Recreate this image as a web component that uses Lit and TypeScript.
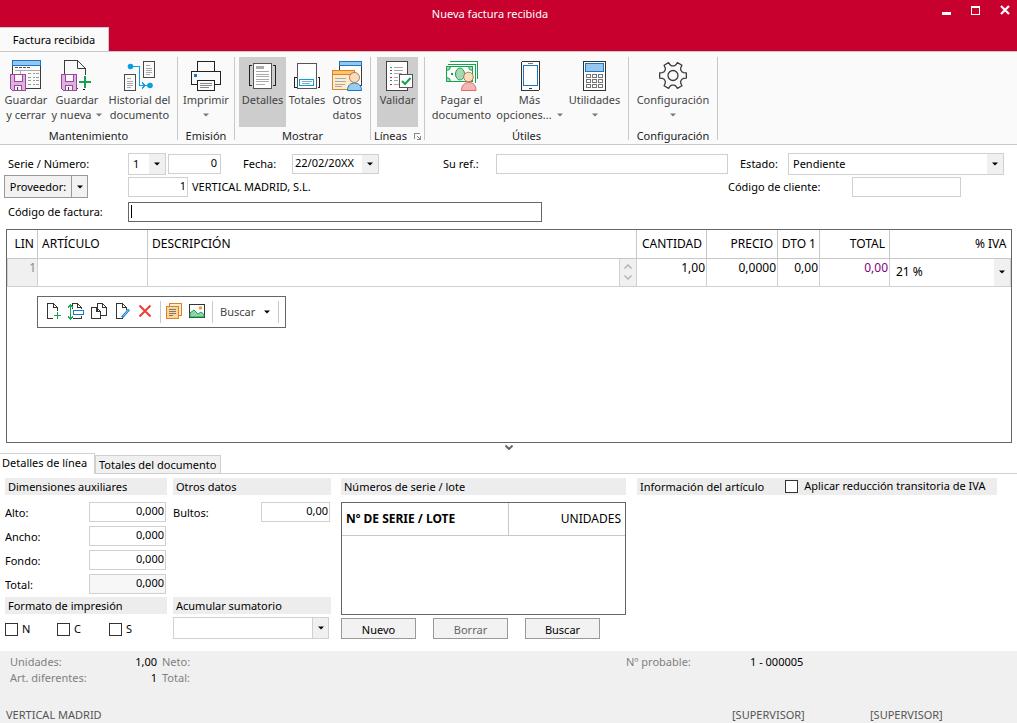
import { LitElement, html, css, svg, nothing } from "lit";
import { customElement, state } from "lit/decorators.js";
import { classMap } from "lit/directives/class-map.js";
import { styleMap } from "lit/directives/style-map.js";

const INK = "#3b3b3b";
const BLUE = "#1a78c2";
const GREEN = "#16a34f";
const PURPLE = "#9c46a0";

const floppy = svg`
  <path d="M.5 14.5h15v16H2.500l-2-2z" fill="#dcb3de" stroke=${PURPLE}/>
  <rect x="4.500" y="14.500" width="8" height="7" fill="#fafafa" stroke=${PURPLE}/>
  <rect x="4.500" y="25.500" width="7" height="5" fill="#fafafa" stroke=${PURPLE}/>
  <path d="M7 27v2.500" stroke=${INK}/>`;

const gearPath = (() => {
  const p = (r: number, deg: number) => {
    const a = (deg * Math.PI) / 180;
    return `${(16 + r * Math.cos(a)).toFixed(2)} ${(15.5 + r * Math.sin(a)).toFixed(2)}`;
  };
  let d = "";
  for (let k = 0; k < 6; k++) {
    const a = k * 60;
    d += `${k ? "L" : "M"}${p(9.6, a - 23)}L${p(11, a - 15)}L${p(13.6, a - 11)}L${p(13.6, a + 11)}L${p(11, a + 15)}L${p(9.6, a + 23)}`;
  }
  return d + "Z";
})();

const icons: Record<string, unknown> = {
  saveClose: svg`
    <rect x="2.500" y=".5" width="28" height="28" fill="#fafafa" stroke=${INK}/>
    <rect x="2.500" y=".5" width="28" height="5" fill="#96c8ef" stroke=${BLUE}/>
    <path d="M5 7.500h3m1 0h3m1 0h3m1 0h3" stroke="#555"/>
    <path d="M5 10.500h25M10.500 10.500v4" stroke="#aaa"/>
    <path d="M18 13.500h3m2 0h2m1 0h3M18 17.500h3m2 0h2m1 0h3M18 20.500h3m2 0h2m1 0h3M18 24.500h3m2 0h2m1 0h3" stroke="#999"/>
    ${floppy}`,
  saveNew: svg`
    <path d="M3.500 28.500V.5h13l8 8v20z" fill="#fafafa" stroke=${INK}/>
    <path d="M16.500 .5v8h8" fill="none" stroke=${INK} shape-rendering="auto"/>
    <rect x="17" y="15" width="14" height="14" fill="#fafafa"/>
    <path d="M24.500 29v1.500H18" stroke="#fafafa"/>
    ${floppy}
    <path d="M24 16v12M18 22h12" stroke=${GREEN} stroke-width="2"/>`,
  history: svg`
    <rect x=".5" y="14.500" width="11" height="16" fill="#fafafa" stroke="#4a4a4a"/>
    <path d="M3 18.500h4M3 21.500h6M3 23.500h6M3 25.500h6M3 27.500h4" stroke="#aaa"/>
    <rect x="19.500" y="1.500" width="11" height="16" fill="#fafafa" stroke="#4a4a4a"/>
    <path d="M22 5.500h4M22 8.500h6M22 10.500h6M22 12.500h6M22 14.500h4" stroke="#aaa"/>
    <path d="M7 6.500h8.500v19H25M18 22.500l3 3-3 3" fill="none" stroke="#0a9fe2"/>
    <circle cx="6.500" cy="6.500" r="2.800" fill="#0a9fe2" shape-rendering="auto"/>
    <circle cx="26" cy="25.500" r="2.800" fill="#0a9fe2" shape-rendering="auto"/>`,
  print: svg`
    <rect x="7.500" y="1.500" width="17" height="10" fill="#fafafa" stroke="#222"/>
    <rect x="1.500" y="11.500" width="29" height="13" fill="#fafafa" stroke="#222"/>
    <rect x="4" y="14" width="3" height="3" fill=${BLUE}/>
    <rect x="7.500" y="20.500" width="17" height="10" fill="#fafafa" stroke="#222"/>
    <path d="M10 23.500h12M10 25.500h12M10 27.500h9" stroke="#888"/>`,
  details: svg`
    <rect x="6.500" y="3.500" width="18" height="25" fill="#fff" stroke="#555"/>
    <rect x="9" y="6" width="8" height="3" fill="#aaa"/>
    <path d="M9 11.500h13M9 14.500h13M9 16.500h13M9 19.500h13M9 21.500h13M9 24.500h9" stroke="#aaa"/>
    <path d="M5 5.500H2.500v20H5M26 5.500h2.500v20H26" fill="none" stroke="#222"/>`,
  totals: svg`
    <rect x="6.500" y="3.500" width="19" height="25" fill="#fff" stroke="#555"/>
    <rect x="8.500" y="19.500" width="14" height="6" fill="#fff" stroke="#0a9fe2"/>
    <path d="M11 21.500h10M11 23.500h8" stroke="#8ab"/>
    <path d="M5.500 17.500h-2v10h2M27 17.500h1.500v10H27" fill="none" stroke="#222"/>`,
  others: svg`
    <rect x="8.500" y="1.500" width="22" height="24" fill="#fff" stroke=${INK}/>
    <rect x="8.500" y="1.500" width="22" height="4" fill="#96c8ef" stroke=${BLUE}/>
    <rect x="1.500" y="10.500" width="22" height="19" fill="#fdeccb" stroke="#d9822b"/>
    <rect x="1.500" y="10.500" width="22" height="4" fill="#ffc36b" stroke="#d9822b"/>
    <path d="M4 18.500h11M4 21.500h11M4 24.500h10M4 26.500h7" stroke="#aaa"/>
    <g shape-rendering="auto">
      <path d="M16.500 30.500c0-5 3-7.500 7-7.500s7 2.500 7 7.500z" fill="#9bcbee" stroke=${BLUE}/>
      <circle cx="23.500" cy="17.500" r="5" fill="#fbdcbf" stroke="#b07a50"/>
    </g>`,
  validate: svg`
    <rect x="4.500" y="1.500" width="21" height="29" fill="#fff" stroke="#444"/>
    <path d="M8 7.500h2M8 13.500h2M8 20.500h2" stroke=${GREEN}/>
    <path d="M8 10.500h2M8 17.500h2M8 24.500h2" stroke="#d11b3f"/>
    <path d="M12 7.500h9M12 10.500h9M12 13.500h8M12 17.500h4M12 20.500h4M12 24.500h5" stroke="#aaa"/>
    <rect x="17.500" y="14.500" width="13" height="13" fill="#fff" stroke="#555"/>
    <path d="M20 21l3 3 5.500-6" fill="none" stroke=${GREEN} stroke-width="2" shape-rendering="auto"/>`,
  pay: svg`
    <path d="M4 1.500h27.500v17M2 4.500h27.500v18" fill="none" stroke=${GREEN}/>
    <rect x=".5" y="6.500" width="26" height="15" fill="#fff" stroke=${GREEN}/>
    <g shape-rendering="auto">
      <path d="M.5 10.500a4 4 0 0 0 4-4h-4zM.5 17.500a4 4 0 0 1 4 4h-4zM26.500 10.500a4 4 0 0 1-4-4h4z" fill="#a9d8b5" stroke=${GREEN}/>
      <ellipse cx="14" cy="14" rx="4.500" ry="6" fill="#a9d8b5" stroke=${GREEN}/>
      <circle cx="6" cy="14" r="1.200" fill=${GREEN}/>
      <path d="M15.500 30.500c0-5 3-8 7.500-8s7 3 7 8z" fill="#f6b5b5" stroke="#e36a6a"/>
      <circle cx="22.500" cy="17" r="4.800" fill="#fbdcbf" stroke="#b07a50"/>
    </g>`,
  phone: svg`
    <rect x="7.500" y="1.500" width="18" height="29" rx="1.500" fill="#fff" stroke="#333"/>
    <rect x="9.500" y="5.500" width="14" height="20" fill="#fff" stroke=${BLUE}/>
    <path d="M14 3.500h5" stroke="#777"/><path d="M15 28.500h3" stroke="#333"/>`,
  calc: svg`
    <rect x="4.500" y="1.500" width="22" height="29" fill="#fff" stroke="#333"/>
    <rect x="6.500" y="3.500" width="18" height="8" fill="#96c8ef" stroke=${BLUE}/>
    ${[14.5, 19.5, 24.5].map((y) => [7.5, 13.5, 19.5].map((x) => svg`<rect x=${x} y=${y} width="4" height="3" fill="#fff" stroke="#777"/>`))}`,
  gear: svg`
    <g shape-rendering="auto" fill="none" stroke=${INK} stroke-width="1.300" stroke-linejoin="round">
      <path d=${gearPath}/><circle cx="16" cy="15.500" r="5"/>
    </g>`,
};

const lineIcons: Record<string, unknown> = {
  "Nueva línea": svg`<path d="M8 15.500H2.500V.5h6l4 4V8M8.500 .5v4h4" fill="none" stroke="#333"/>
    <path d="M12.500 9v7M9 12.500h7" stroke=${GREEN}/>`,
  "Insertar línea": svg`<path d="M4.500 6V.5h5l4 4V6M9.500 .5v4h4M5 15.500h8.500V13" fill="none" stroke="#333"/>
    <rect x="5.500" y="7.500" width="10" height="4" fill="#fff" stroke=${BLUE}/>
    <path d="M2.500 2v14M0 4.500l2.500-2.500 2.500 2.500M0 13.500L2.500 16 5 13.500" fill="none" stroke=${GREEN}/>`,
  "Duplicar línea": svg`<path d="M6.500 12.500V.5h5l4 4v8zM11.500 .5v4h4" fill="#fff" stroke="#333"/>
    <path d="M.5 15.500V4.500h5l4 4v7zM5.500 4.500v4h4" fill="#fff" stroke="#333"/>`,
  "Modificar línea": svg`<path d="M12.500 7V4.500l-4-4h-6v15h6M8.500 .5v4h4" fill="none" stroke="#333"/>
    <path d="M8 14.500L15 6.500" stroke=${BLUE} stroke-width="2.600" shape-rendering="auto"/>
    <path d="M9 13.500L14.500 7" stroke="#9ccbef" stroke-width="1" shape-rendering="auto"/>`,
  "Borrar línea": svg`<path d="M2.500 2.500l11 11M13.500 2.500l-11 11" stroke="#ee3d36" stroke-width="2" shape-rendering="auto"/>`,
  "Notas": svg`<path d="M3.500 3V.5h12v12H13" fill="#fdeccb" stroke="#d9822b"/>
    <rect x=".5" y="3.500" width="12" height="12" fill="#ffd597" stroke="#d9822b"/>
    <path d="M3 6.500h7M3 8.500h7M3 10.500h7M3 12.500h4" stroke="#777"/>`,
  "Imagen": svg`<rect x=".5" y="1.500" width="15" height="13" fill="#fff" stroke="#333"/>
    <path d="M1 10l4-3 4 4 3-2 3 2.500v2.500H1z" fill="#8fd3a8" stroke=${GREEN} shape-rendering="auto"/>
    <circle cx="11.500" cy="5" r="1.800" fill="#f39a3d" shape-rendering="auto"/>`,
};

interface RibbonItem { icon: string; lines: string[]; width: number; arrow?: "inline" | "below"; on?: boolean }
interface RibbonGroup { title: string; items: RibbonItem[]; launcher?: boolean }

const ribbon: RibbonGroup[] = [
  { title: "Mantenimiento", items: [
    { icon: "saveClose", lines: ["Guardar", "y cerrar"], width: 50 },
    { icon: "saveNew", lines: ["Guardar", "y nueva"], width: 52, arrow: "inline" },
    { icon: "history", lines: ["Historial del", "documento"], width: 73 } ] },
  { title: "Emisión", items: [{ icon: "print", lines: ["Imprimir"], width: 48, arrow: "below" }] },
  { title: "Mostrar", items: [
    { icon: "details", lines: ["Detalles"], width: 47, on: true },
    { icon: "totals", lines: ["Totales"], width: 42 },
    { icon: "others", lines: ["Otros", "datos"], width: 38 } ] },
  { title: "Líneas", launcher: true, items: [{ icon: "validate", lines: ["Validar"], width: 41, on: true }] },
  { title: "Útiles", items: [
    { icon: "pay", lines: ["Pagar el", "documento"], width: 65 },
    { icon: "phone", lines: ["Más", "opciones..."], width: 71, arrow: "inline" },
    { icon: "calc", lines: ["Utilidades"], width: 59, arrow: "below" } ] },
  { title: "Configuración", items: [{ icon: "gear", lines: ["Configuración"], width: 80, arrow: "below" }] },
];

const arrow = html`<svg class="arrow" width="6" height="4" viewBox="0 0 6 4" aria-hidden="true"><path d="M0 .5h6L3 3.500z" fill="currentColor"/></svg>`;

@customElement("app-root")
export class AppRoot extends LitElement {
  @state() private tab = 0;

  static styles = css`
    :host { display: flex; flex-direction: column; min-height: 100vh; background: #fff; color: #000;
      font: 11px/16px "Noto Sans", "Open Sans", sans-serif; }
    * { box-sizing: border-box; }
    button, input, select { font: inherit; color: inherit; margin: 0; border-radius: 0; }
    button { cursor: pointer; }
    svg { display: block; flex: none; }

    .titlebar { background: #c8002d; color: #fff; height: 27px; display: flex; align-items: center; padding: 0 7px 0 38px; }
    .title { flex: 1; text-align: center; font: inherit; margin: 0; }
    .window { display: flex; gap: 19px; margin-bottom: 8px; }
    .window button { border: 0; padding: 0; background: none; color: #fff; }
    .tabs { background: #c8002d; display: flex; }
    .ribbon-tab { border: 0; border-top: 1px solid #c8c8c8; border-right: 1px solid #c8c8c8; background: #fafafa; height: 24px; width: 109px; padding: 0; }

    .ribbon { display: flex; background: #fafafa; border-top: 1px solid #c8c8c8; border-bottom: 1px solid #c8c8c8; padding: 5px 0 4px; height: 94px; }
    .group { display: flex; flex-direction: column; justify-content: space-between; border-right: 1px solid #c8c8c8; padding: 0 4px; }
    .group:first-child { padding: 0 1px; }
    .group.launch { padding: 0 6px; }
    .items { display: flex; }
    .cmd { border: 0; background: none; color: #444; padding: 3px 0 0; height: 70px; display: flex; flex-direction: column; align-items: center; line-height: 15px; white-space: nowrap; }
    .cmd.on { background: #cdcdcd; }
    .cmd .arrow { color: #777; }
    .cmd.below .arrow { margin-top: 6px; }
    .last { display: flex; align-items: center; gap: 5px; }
    .caption { display: flex; justify-content: center; gap: 7px; line-height: 12px; align-items: center; color: #222; height: 8px; }
    .launch .caption { margin: 0 -5px; }

    .form { display: flex; flex-direction: column; padding: 7px 13px 8px 8px; }
    .line { display: flex; align-items: center; height: 23px; }
    .line.code { height: 25px; padding-top: 2px; margin-bottom: -2px; }
    .field { border: 1px solid #d0d0d0; background: #fff; height: 20px; padding: 0 3px 2px; min-width: 0; outline: none; }
    .num { text-align: right; }
    .pick { display: grid; align-items: stretch; height: 22px; border: 1px solid #d0d0d0; background: #fff; min-width: 0; }
    .pick select, .pick input { grid-area: 1 / 1; appearance: none; border: 0; background: none; padding: 0 18px 0 4px; min-width: 0; width: 100%; outline: none; }
    .pick .drop { grid-area: 1 / 1; justify-self: end; width: 16px; background: #f0f0f0; display: grid; place-items: center; pointer-events: none; }
    .key { width: 120px; }
    .serie { width: 38px; margin-right: 2px; }
    .number { width: 53px; }
    .date-key { width: 71px; padding-left: 22px; }
    .date { width: 87px; height: 20px; }
    .date input { padding: 0 18px 2px 2px; }
    .ref-key { width: 117px; padding-left: 64px; }
    .ref { flex: 224 1 0; }
    .state-key { width: 60px; padding-left: 12px; }
    .state { flex: 214 1 0; }
    .split { display: flex; width: 84px; margin: 0 40px 0 -4px; height: 23px; border: 1px solid #999; background: #f2f2f2; }
    .split button { border: 0; background: none; padding: 0; }
    .split .main { flex: 1; }
    .split .more { width: 16px; border-left: 1px solid #999; display: grid; place-items: center; }
    .supplier { width: 60px; padding: 0 1px 2px; margin-right: 4px; }
    .client-key { margin-left: auto; width: 124px; }
    .client { width: 109px; margin-right: 43px; }
    .invoice { width: 414px; border-color: #666; background: #fff linear-gradient(#000, #000) 2px 2px / 1px 13px no-repeat; }

    .lines { flex: 1; margin: 0 5px 0 6px; border: 1px solid #666; min-height: 160px; }
    table { border-collapse: collapse; table-layout: fixed; width: 100%; }
    th { font-weight: 400; font-size: 12px; height: 28px; padding: 0 4px; text-align: left; white-space: nowrap; border: 1px solid #c8c8c8; border-top: 0; }
    th:first-child, td:first-child { border-left: 0; }
    th:last-child { border-right: 0; }
    th.num { text-align: right; }
    .lines th:first-child { padding: 0 3px; text-align: right; }
    .lines td { height: 28px; padding: 0; border: 1px solid #d0d0d0; vertical-align: top; }
    .lines td input { display: block; width: 100%; height: 18px; border: 0; background: none; padding: 0 1px; outline: none; font-size: 12px; }
    .lines td:first-child { background: #f0f0f0; color: #888; text-align: right; padding-right: 1px; line-height: 18px; font-size: 12px; }
    .lines .pick { border: 0; height: 27px; font-size: 12px; }
    .lines .pick select { padding-left: 6px; }
    .w-lin { width: 30px; } .w-art { width: 110px; } .w-qty { width: 70px; } .w-price { width: 71px; } .w-dto { width: 42px; } .w-total { width: 70px; } .w-iva { width: 121px; }
    th.w-dto { padding: 0 3px; }
    .desc { display: flex; }
    .desc input { flex: 1; }
    .spin { width: 17px; height: 27px; background: #f0f0f0; border-left: 1px solid #d0d0d0; display: flex; flex-direction: column; justify-content: space-around; align-items: center; padding: 2px 0; }
    .spin button { border: 0; background: none; padding: 0; }
    .total-value { color: #800080; }

    .toolbar { display: flex; width: max-content; align-items: center; margin: 9px 0 0 30px; border: 1px solid #666; height: 32px; padding: 4px; }
    .toolbar button { border: 0; background: none; padding: 0; width: 23px; height: 22px; display: grid; place-items: center; }
    .toolbar .search { width: 60px; display: flex; align-items: center; justify-content: space-between; padding: 0 5px; color: #444; }
    .toolbar .search .arrow { color: #000; }
    .bar { width: 1px; height: 22px; margin: 0 2px 0 3px; background: #c8c8c8; }

    .splitter { display: grid; place-items: center; height: 10px; border: 0; background: none; width: 100%; padding: 0 0 2px; }
    .sheet-tabs { display: flex; align-items: flex-end; border-bottom: 1px solid #d0d0d0; height: 21px; }
    .sheet-tab { border: 1px solid #d0d0d0; border-bottom: 0; background: #f0f0f0; height: 18px; padding: 0 3px; white-space: nowrap; width: 126px; text-align: left; }
    .sheet-tab.active { background: #fff; height: 21px; margin-bottom: -1px; border-left: 0; padding: 0 2px 2px; width: 95px; }

    .panel { display: grid; grid-template-columns: 162px 158px 285px 1fr; column-gap: 6px; padding: 4px 20px 12px 5px; }
    .panel .lots { margin: 0 -4px 0 4px; }
    .panel .info { margin-left: 9px; }
    .stack { display: flex; flex-direction: column; }
    h2 { font: inherit; margin: 0; background: #ededed; height: 17px; line-height: 18px; padding: 0 3px; white-space: nowrap; }
    .pairs { display: flex; flex-direction: column; gap: 4px; margin: 7px 1px 4px 0; height: 91px; }
    .pair { display: flex; justify-content: space-between; height: 20px; align-items: center; }
    .pair label { padding-top: 2px; }
    .pair .field { padding: 0 1px 3px; }
    .pair .wide { width: 77px; } .pair .narrow { width: 69px; }
    .field.readonly { background: #f7f7f7; }
    .checks { display: flex; margin-top: 7px; }
    .check { display: flex; align-items: center; gap: 4px; width: 52px; }
    .check input { appearance: none; width: 13px; height: 13px; border: 1px solid #333; background: #fff; }
    .sum { width: 156px; margin-top: 3px; }
    .sum .drop { border-left: 1px solid #d0d0d0; }
    .serials { border: 1px solid #666; height: 113px; margin-top: 7px; }
    .serials th { height: 32px; }
    .serials th:first-child { font-weight: 700; width: 166px; }
    .actions { display: flex; gap: 17px; margin-top: 3px; }
    .actions button { width: 75px; height: 21px; border: 1px solid #999; background: #f2f2f2; padding: 2px 0 0; }
    .actions button:disabled { color: #666; }
    .info h2 { display: flex; }
    .check.iva { margin-left: 21px; width: auto; gap: 6px; height: 16px; }

    .footer { background: #f0f0f0; color: #808080; height: 72px; display: flex; flex-direction: column; justify-content: space-between; padding: 3px 0 0; }
    .sums { display: grid; grid-template-columns: 97px 50px 1fr 124px 267px; padding-left: 10px; }
    .sums b { font-weight: 400; color: #000; }
    .sums .amount { padding-left: 5px; }
    .status { display: grid; grid-template-columns: 1fr 138px 147px; padding-left: 6px; color: #555; }
  `;

  private command(i: RibbonItem) {
    const last = i.lines.length - 1;
    return html`<button class=${classMap({ cmd: true, on: !!i.on, below: i.arrow === "below" })} style=${styleMap({ width: i.width + "px" })}>
      <svg width="32" height="32" viewBox="0 0 32 32" shape-rendering="crispEdges" aria-hidden="true">${icons[i.icon]}</svg>
      ${i.lines.map((t, n) => html`<span class="last">${t}${n === last && i.arrow === "inline" ? arrow : nothing}</span>`)}
      ${i.arrow === "below" ? arrow : nothing}
    </button>`;
  }

  private pair(label: string, value: string, size: string, readonly = false) {
    const id = label.toLowerCase();
    return html`<div class="pair"><label for=${id}>${label}:</label>
      <input id=${id} class="field num ${size} ${readonly ? "readonly" : ""}" .value=${value} ?readonly=${readonly}></div>`;
  }

  private tools(names: string[]) {
    return names.map((n) => html`<button aria-label=${n}><svg width="17" height="17" viewBox="0 0 17 17" shape-rendering="crispEdges">${lineIcons[n]}</svg></button>`);
  }

  render() {
    return html`
      <header class="titlebar">
        <h1 class="title">Nueva factura recibida</h1>
        <div class="window">
          <button aria-label="Minimizar"><svg width="10" height="10"><path d="M0 7h9v3H0z" fill="currentColor"/></svg></button>
          <button aria-label="Maximizar"><svg width="10" height="10" shape-rendering="crispEdges"><path d="M.5 1v8h8V1M0 2h9" fill="none" stroke="currentColor"/><path d="M0 1h9v2H0z" fill="currentColor"/></svg></button>
          <button aria-label="Cerrar"><svg width="10" height="10"><path d="M1 1l8 8M9 1L1 9" stroke="currentColor" stroke-width="2.200"/></svg></button>
        </div>
      </header>
      <nav class="tabs"><button class="ribbon-tab">Factura recibida</button></nav>
      <section class="ribbon">
        ${ribbon.map((g) => html`<div class=${classMap({ group: true, launch: !!g.launcher })}>
          <div class="items">${g.items.map((i) => this.command(i))}</div>
          <div class="caption">${g.title}${g.launcher ? html`<svg width="7" height="7" shape-rendering="crispEdges"><path d="M.5 6V.5H6M3 3l3 3M6.500 3v3.500H3" fill="none" stroke="#888"/></svg>` : nothing}</div>
        </div>`)}
      </section>

      <form class="form" @submit=${(e: Event) => e.preventDefault()}>
        <div class="line">
          <label class="key" for="serie">Serie / Número:</label>
          <span class="pick serie"><select id="serie"><option>1</option></select><span class="drop">${arrow}</span></span>
          <input class="field num number" aria-label="Número" value="0">
          <label class="date-key" for="fecha">Fecha:</label>
          <span class="pick date"><input id="fecha" value="22/02/20XX"><span class="drop">${arrow}</span></span>
          <label class="ref-key" for="ref">Su ref.:</label>
          <input class="field ref" id="ref">
          <label class="state-key" for="estado">Estado:</label>
          <span class="pick state"><select id="estado"><option>Pendiente</option></select><span class="drop">${arrow}</span></span>
        </div>
        <div class="line">
          <span class="split"><button type="button" class="main">Proveedor:</button><button type="button" class="more" aria-label="Más">${arrow}</button></span>
          <input class="field num supplier" aria-label="Proveedor" value="1">
          <span>VERTICAL MADRID, S.L.</span>
          <label class="client-key" for="cliente">Código de cliente:</label>
          <input class="field client" id="cliente">
        </div>
        <div class="line code">
          <label class="key" for="codigo">Código de factura:</label>
          <input class="field invoice" id="codigo">
        </div>
      </form>

      <section class="lines">
        <table>
          <thead><tr>
            <th class="w-lin">LIN</th><th class="w-art">ARTÍCULO</th><th>DESCRIPCIÓN</th><th class="w-qty num">CANTIDAD</th>
            <th class="w-price num">PRECIO</th><th class="w-dto num">DTO 1</th><th class="w-total num">TOTAL</th><th class="w-iva num">% IVA</th>
          </tr></thead>
          <tbody><tr>
            <td>1</td>
            <td><input aria-label="Artículo"></td>
            <td><div class="desc"><input aria-label="Descripción"><span class="spin">
              <button aria-label="Subir"><svg width="8" height="5"><path d="M.5 4.500L4 1l3.500 3.500" fill="none" stroke="#b5b5b5" stroke-width="1.500"/></svg></button>
              <button aria-label="Bajar"><svg width="8" height="5"><path d="M.5 .5L4 4 7.500 .5" fill="none" stroke="#b5b5b5" stroke-width="1.500"/></svg></button>
            </span></div></td>
            <td><input class="num" aria-label="Cantidad" value="1,00"></td>
            <td><input class="num" aria-label="Precio" value="0,0000"></td>
            <td><input class="num" aria-label="Dto 1" value="0,00"></td>
            <td><input class="num total-value" aria-label="Total" value="0,00"></td>
            <td><span class="pick"><select aria-label="% IVA"><option>21 %</option></select><span class="drop">${arrow}</span></span></td>
          </tr></tbody>
        </table>
        <div class="toolbar">
          ${this.tools(["Nueva línea", "Insertar línea", "Duplicar línea", "Modificar línea", "Borrar línea"])}
          <span class="bar"></span>
          ${this.tools(["Notas", "Imagen"])}
          <span class="bar"></span>
          <button class="search">Buscar ${arrow}</button>
          <span class="bar"></span>
        </div>
      </section>

      <button class="splitter" aria-label="Ocultar detalles"><svg width="8" height="5"><path d="M.5 .5L4 4 7.500 .5" fill="none" stroke="#666" stroke-width="2"/></svg></button>
      <nav class="sheet-tabs">
        ${["Detalles de línea", "Totales del documento"].map((t, n) => html`<button class=${classMap({ "sheet-tab": true, active: this.tab === n })} @click=${() => (this.tab = n)}>${t}</button>`)}
      </nav>
      <section class="panel">
        <div class="stack">
          <h2>Dimensiones auxiliares</h2>
          <div class="pairs">
            ${this.pair("Alto", "0,000", "wide")}${this.pair("Ancho", "0,000", "wide")}
            ${this.pair("Fondo", "0,000", "wide")}${this.pair("Total", "0,000", "wide", true)}
          </div>
          <h2>Formato de impresión</h2>
          <div class="checks">${["N", "C", "S"].map((c) => html`<label class="check"><input type="checkbox">${c}</label>`)}</div>
        </div>
        <div class="stack">
          <h2>Otros datos</h2>
          <div class="pairs">${this.pair("Bultos", "0,00", "narrow")}</div>
          <h2>Acumular sumatorio</h2>
          <span class="pick sum"><select aria-label="Acumular sumatorio"><option></option></select><span class="drop">${arrow}</span></span>
        </div>
        <div class="stack lots">
          <h2>Números de serie / lote</h2>
          <div class="serials"><table><thead><tr><th>Nº DE SERIE / LOTE</th><th class="num">UNIDADES</th></tr></thead></table></div>
          <div class="actions"><button>Nuevo</button><button disabled>Borrar</button><button>Buscar</button></div>
        </div>
        <div class="info">
          <h2>Información del artículo <label class="check iva"><input type="checkbox">Aplicar reducción transitoria de IVA</label></h2>
        </div>
      </section>

      <footer class="footer">
        <div class="sums">
          <span>Unidades:</span><b class="num">1,00</b><span class="amount">Neto:</span><span>Nº probable:</span><b>1 - 000005</b>
          <span>Art. diferentes:</span><b class="num">1</b><span class="amount">Total:</span>
        </div>
        <div class="status"><span>VERTICAL MADRID</span><span>[SUPERVISOR]</span><span>[SUPERVISOR]</span></div>
      </footer>
    `;
  }
}
